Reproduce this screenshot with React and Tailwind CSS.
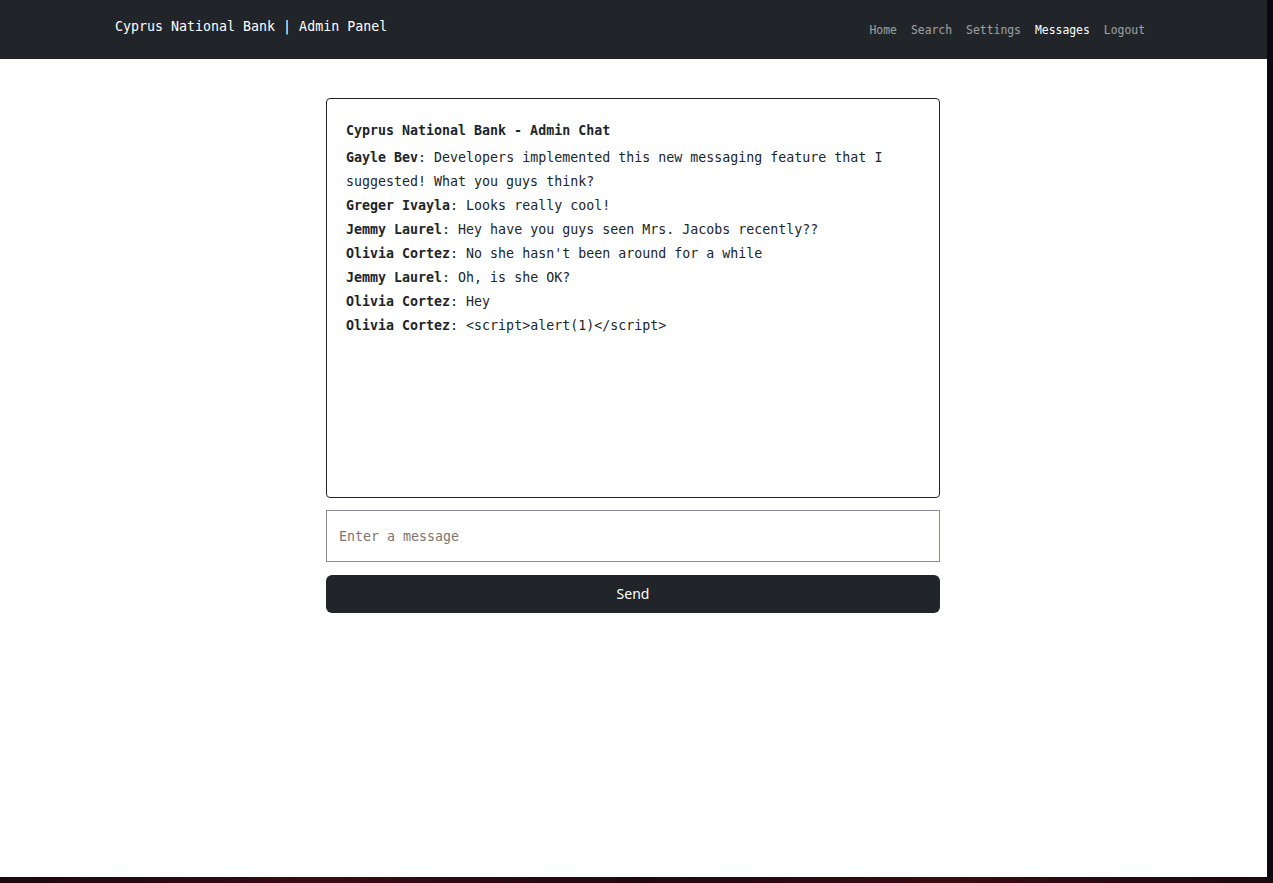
import React from "react";

const messages = [
  ["Gayle Bev", "Developers implemented this new messaging feature that I suggested! What you guys think?"],
  ["Greger Ivayla", "Looks really cool!"],
  ["Jemmy Laurel", "Hey have you guys seen Mrs. Jacobs recently??"],
  ["Olivia Cortez", "No she hasn't been around for a while"],
  ["Jemmy Laurel", "Oh, is she OK?"],
  ["Olivia Cortez", "Hey"],
  ["Olivia Cortez", "<script>alert(1)</script>"],
];

export default function App() {
  const [text, setText] = React.useState("");

  return (
    <div className="h-[883px] w-[1273px] overflow-hidden bg-[linear-gradient(90deg,#1a0810,#3a0a14,#200810,#3a0a12,#1a0810)]">
      <div className="h-[877px] w-[1273px] bg-[#0c0712]">
        <div className="h-[877px] w-[1267px] bg-white font-['DejaVu_Sans_Mono',monospace] text-[#212529]">
          {/* top bar */}
          <nav className="flex h-[59px] items-start justify-between bg-[#212529] pl-[115px] pr-[122px]">
            <a href="#" className="mt-[17px] text-[13.3px] leading-[20px] text-white">
              Cyprus National Bank | Admin Panel
            </a>
            <ul className="mt-[21px] flex gap-[14px] text-[11.4px] leading-[18px]">
              <li><a href="#" className="text-white/55">Home</a></li>
              <li><a href="#" className="text-white/55">Search</a></li>
              <li><a href="#" className="text-white/55">Settings</a></li>
              <li><a href="#" className="text-white">Messages</a></li>
              <li><a href="#" className="text-white/55">Logout</a></li>
            </ul>
          </nav>

          <div className="ml-[326px] mt-[39px] flex w-[614px] flex-col">
            <div className="h-[400px] rounded-[4px] border border-[#212529] px-[19px] pt-[21px]">
              <h5 className="mb-[4px] text-[13.3px] font-bold leading-[22px]">
                Cyprus National Bank - Admin Chat
              </h5>
              {messages.map(([who, msg], i) => (
                <p key={i} className="text-[13.3px] leading-[24px]">
                  <b>{who}</b>: {msg}
                </p>
              ))}
            </div>

            <input
              value={text}
              onChange={(e) => setText(e.target.value)}
              placeholder="Enter a message"
              className="mt-[12px] h-[52px] w-full border border-[#8e8a99] px-[12px] text-[13.3px] outline-none placeholder:text-[#7d7570]"
            />

            <button className="mt-[13px] h-[38px] w-full rounded-[6px] bg-[#212529] font-['Noto_Sans',sans-serif] text-[14px] leading-[36px] text-white">
              Send
            </button>
          </div>
        </div>
      </div>
    </div>
  );
}
